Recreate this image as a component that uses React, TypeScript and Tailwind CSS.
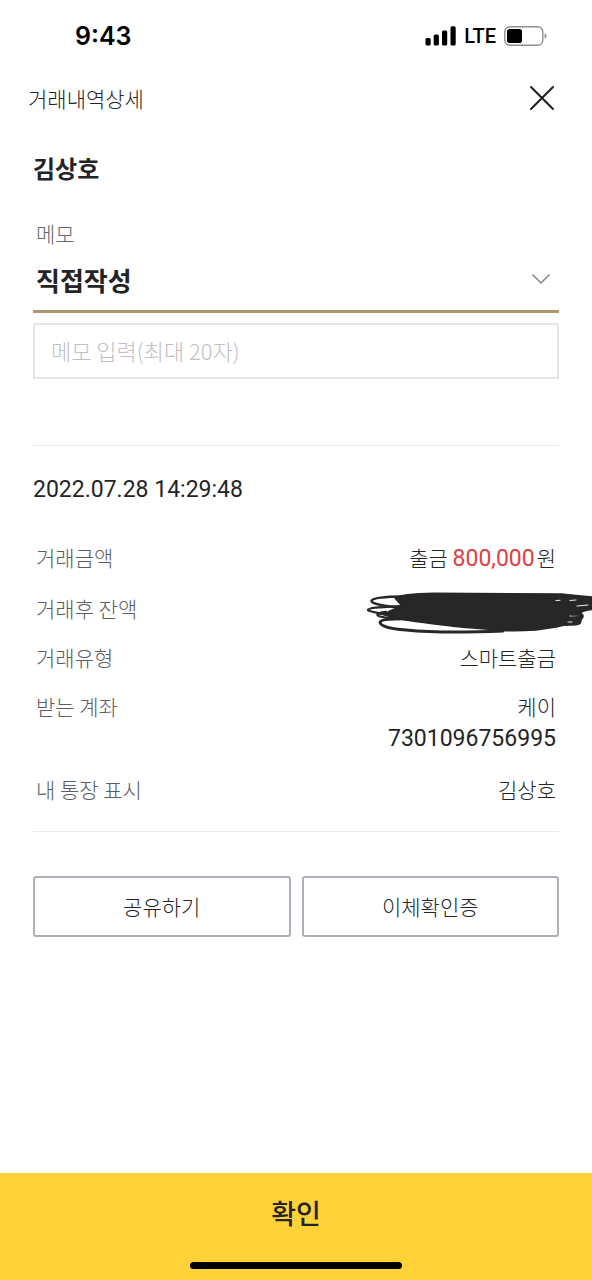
import { useState } from 'react';

const details = [
  { label: '거래유형', lines: ['스마트출금'] },
  { label: '받는 계좌', lines: ['케이', '7301096756995'] },
  { label: '내 통장 표시', lines: ['김상호'] },
];

function StatusBar() {
  return (
    <div className="h-[72px] pl-[75px] pr-[45px] flex items-center justify-between text-black">
      <span className="font-['Inter'] font-semibold text-[25px] leading-8">9:43</span>
      <div className="flex items-center gap-2">
        <svg className="w-[31px] h-5" viewBox="0 0 31 20" fill="currentColor">
          <rect x="0.5" y="12" width="5.2" height="7.5" rx="1.6" />
          <rect x="8.7" y="8.6" width="5.2" height="10.9" rx="1.6" />
          <rect x="17" y="4.5" width="5.2" height="15" rx="1.6" />
          <rect x="25.5" y="0.3" width="5.2" height="19.2" rx="1.6" />
        </svg>
        <span className="font-['Roboto'] font-medium text-xl leading-6">LTE</span>
        <svg className="w-[43px] h-5" viewBox="0 0 43 20">
          <rect x="0.8" y="0.8" width="38" height="18.4" rx="5" fill="none" stroke="#8e8e8e" strokeWidth="1.4" />
          <rect x="3" y="3" width="15" height="14" rx="2.8" fill="#000" />
          <path d="M40.600 7.200c2.600 1 2.600 4.600 0 5.600z" fill="#8e8e8e" />
        </svg>
      </div>
    </div>
  );
}

// Marker strokes that hide the balance
function Scribble() {
  return (
    <svg className="absolute top-0 -right-9 w-[226px] h-[42px]" viewBox="0 0 226 42" fill="none" stroke="#272727" strokeLinecap="round" strokeLinejoin="round" role="img" aria-label="잔액 가림">
      <path d="M29 6C34 2.500 50 1.500 68 1.200L196 2C204 3 216 4 227 5V14L222 19 217 25 213 31 203 32 190 35 170 38C155 39 145 39 137 38.500L107 36C90 35 70 32 46 29L28 26 18 22.500 24 19 36 14z" fill="#272727" strokeWidth="1.500" />
      <path d="M36 4.500C20 4.500 5 6 5.500 9C6 12 18 14 34 16" strokeWidth="2.400" />
      <path d="M36 14C18 15 2 15.500 2 18C3 20 14 21 26 24" strokeWidth="2.400" />
      <path d="M20 20C14 20.500 10 22 12 23.500C14 25.500 22 26 34 27" strokeWidth="2.400" />
      <path d="M44 27C28 26.500 14 27 14 30.500C15 34.500 24 36.500 40 38C60 40 100 40.500 137 39" strokeWidth="3" />
      <path d="M202 24C208 23.500 214 24 217 24.500M200 32.500C208 32 214 32 214 30" strokeWidth="3" />
      <path d="M190 8.500L194 8.300M204 8.500L210 8M211 14L222 13M204 24L213 23.500M202 30L206 30" stroke="#fff" strokeWidth="0.900" />
      <path d="M216 20.500L227 17V28L218 28z" fill="#fff" stroke="none" />
      <path d="M204 19L226 17M206 22.500C214 22 218 23 216 25C214 27 208 27 202 28" strokeWidth="2.600" />
    </svg>
  );
}

export default function App() {
  const [memoType, setMemoType] = useState('직접작성');
  const [memo, setMemo] = useState('');

  return (
    <div className="min-h-screen flex flex-col bg-white text-[#242427] font-['Noto_Sans_CJK_KR',sans-serif] font-light text-[21px] leading-8">
      <StatusBar />

      <header className="h-[52px] pl-7 pr-9 flex items-center justify-between">
        <h1>거래내역상세</h1>
        <button aria-label="닫기">
          <svg className="w-7 h-7" viewBox="0 0 28 28" fill="none" stroke="#1d1d20" strokeWidth="2" strokeLinecap="round">
            <path d="M3 3l22 22M25 3L3 25" />
          </svg>
        </button>
      </header>

      <main className="flex-1 px-[33px] pt-7 pb-10">
        <h2 className="text-2xl leading-8 font-bold">김상호</h2>

        {/* Memo */}
        <label htmlFor="memo-type" className="block mt-[33px] px-[3px] text-[#66666c]">메모</label>
        <div className="relative">
          <select
            id="memo-type"
            value={memoType}
            onChange={(e) => setMemoType(e.target.value)}
            className="block w-full h-16 px-[3px] appearance-none bg-transparent border-b-3 border-[#b0966b] text-[26px] font-bold outline-none"
          >
            <option>직접작성</option>
          </select>
          <svg className="absolute right-2 top-6 w-5 h-3 pointer-events-none" viewBox="0 0 20 12" fill="none" stroke="#85858c" strokeWidth="1.5">
            <path d="M1.500 1.500L10 10l8.500-8.500" />
          </svg>
        </div>
        <input
          type="text"
          aria-label="메모 입력"
          maxLength={20}
          value={memo}
          onChange={(e) => setMemo(e.target.value)}
          placeholder="메모 입력(최대 20자)"
          className="block w-full h-14 mt-[10px] px-4 pb-0.5 border-2 border-[#e6e6e6] text-[22px] placeholder:text-[#bfbfc4] outline-none"
        />

        <hr className="mt-[66px] border-[#e9e9e9]" />

        {/* Transaction */}
        <p className="mt-7 font-['Roboto'] font-normal text-[23px] leading-8">2022.07.28 14:29:48</p>
        <dl className="mt-[35px] px-[3px] flex flex-col gap-[17px]">
          <div className="flex justify-between">
            <dt className="text-[#5c5c62]">거래금액</dt>
            <dd>
              출금 <span className="mr-0.5 font-['Roboto'] font-normal text-[23px] text-[#dd4141]">800,000</span>원
            </dd>
          </div>
          <div className="relative flex justify-between">
            <dt className="text-[#5c5c62]">거래후 잔액</dt>
            <dd>
              <Scribble />
            </dd>
          </div>
          {details.map((item) => (
            <div key={item.label} className="flex justify-between">
              <dt className="text-[#5c5c62]">{item.label}</dt>
              <dd className="text-right">
                {item.lines.map((line) => (
                  <p key={line} className={/^\d+$/.test(line) ? "font-['Roboto'] font-normal text-[23px] leading-[34px]" : ''}>{line}</p>
                ))}
              </dd>
            </div>
          ))}
        </dl>

        <hr className="mt-[26px] border-[#e9e9e9]" />

        <div className="mt-11 grid grid-cols-2 gap-[11px]">
          <button className="h-[61px] pb-0.5 border-2 border-[#acb0b7] rounded-[3px]">공유하기</button>
          <button className="h-[61px] pb-0.5 border-2 border-[#acb0b7] rounded-[3px]">이체확인증</button>
        </div>
      </main>

      <button className="h-[107px] pt-6 pb-[11px] flex flex-col items-center justify-between bg-[#ffd338] text-[27px] leading-8 font-medium">
        확인
        <span className="block w-[212px] h-[7px] rounded-full bg-black" />
      </button>
    </div>
  );
}
